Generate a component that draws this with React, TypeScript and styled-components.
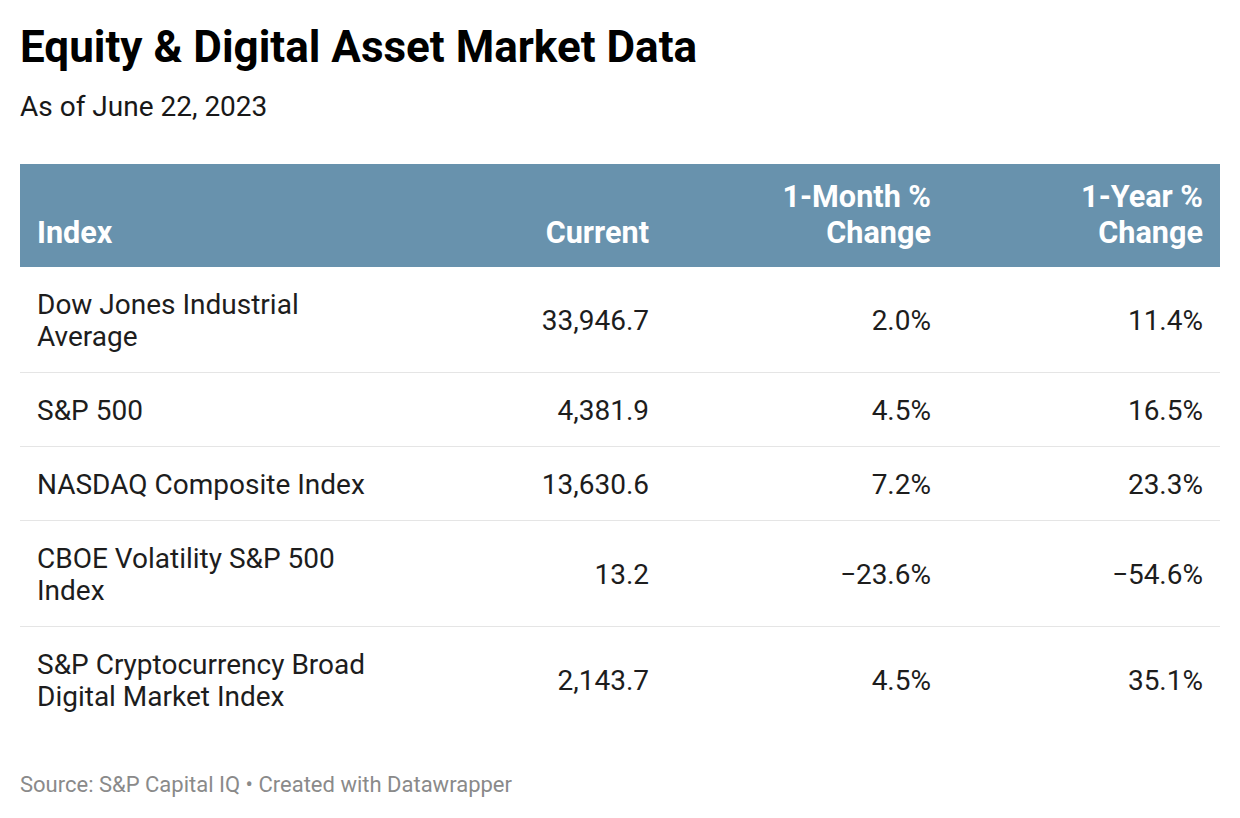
import { FC } from "react";
import styled, { createGlobalStyle } from "styled-components";

const rows = [
  { name: "Dow Jones Industrial Average", current: "33,946.7", month: "2.0%", year: "11.4%" },
  { name: "S&P 500", current: "4,381.9", month: "4.5%", year: "16.5%" },
  { name: "NASDAQ Composite Index", current: "13,630.6", month: "7.2%", year: "23.3%" },
  { name: "CBOE Volatility S&P 500 Index", current: "13.2", month: "\u221223.6%", year: "\u221254.6%" },
  { name: "S&P Cryptocurrency Broad Digital Market Index", current: "2,143.7", month: "4.5%", year: "35.1%" },
];

const App: FC = () => {
  return (
    <>
      <GlobalStyle />
      <Page>
        <Title>Equity &amp; Digital Asset Market Data</Title>
        <Subtitle>As of June 22, 2023</Subtitle>
        <Table>
          <colgroup>
            <col style={{ width: 380 }} />
            <col style={{ width: 266 }} />
            <col style={{ width: 282 }} />
            <col style={{ width: 272 }} />
          </colgroup>
          <thead>
            <tr>
              <HeadCell>Index</HeadCell>
              <HeadCell $right>Current</HeadCell>
              <HeadCell $right>
                1-Month %<br />
                Change
              </HeadCell>
              <HeadCell $right>
                1-Year %<br />
                Change
              </HeadCell>
            </tr>
          </thead>
          <tbody>
            {rows.map((row, i) => (
              <Row key={row.name} $last={i === rows.length - 1}>
                <Cell>{row.name}</Cell>
                <Cell $right>{row.current}</Cell>
                <Cell $right>{row.month}</Cell>
                <Cell $right>{row.year}</Cell>
              </Row>
            ))}
          </tbody>
        </Table>
        <Footer>Source: S&amp;P Capital IQ • Created with Datawrapper</Footer>
      </Page>
    </>
  );
};

const GlobalStyle = createGlobalStyle`
  body {
    margin: 0;
    background: #fff;
    font-family: Roboto, "Liberation Sans", sans-serif;
    color: #1d1d1d;
  }
`;

const Page = styled.div`
  padding: 21px 20px 0;
`;

const Title = styled.h1`
  margin: 0;
  font-size: 44px;
  line-height: 53px;
  font-weight: 700;
  color: #000;
`;

const Subtitle = styled.div`
  margin-top: 16px;
  font-size: 28px;
  line-height: 34px;
  color: #181818;
`;

const Table = styled.table`
  margin-top: 40px;
  width: 1200px;
  border-collapse: collapse;
  table-layout: fixed;
`;

const HeadCell = styled.th<{ $right?: boolean }>`
  background: #6892ad;
  color: #fff;
  font-size: 30.6px;
  line-height: 36px;
  font-weight: 700;
  text-align: ${(p) => (p.$right ? "right" : "left")};
  vertical-align: bottom;
  padding: 15px 17px 16px;
  height: 72px;
`;

const Row = styled.tr<{ $last?: boolean }>`
  border-bottom: ${(p) => (p.$last ? "none" : "1px solid #e5e5e5")};
`;

const Cell = styled.td<{ $right?: boolean }>`
  font-size: 28px;
  line-height: 32px;
  text-align: ${(p) => (p.$right ? "right" : "left")};
  vertical-align: middle;
  padding: 22px 17px 19px;
`;

const Footer = styled.div`
  margin-top: 40px;
  font-size: 22px;
  line-height: 26px;
  color: #8a8a8a;
`;

export default App;
